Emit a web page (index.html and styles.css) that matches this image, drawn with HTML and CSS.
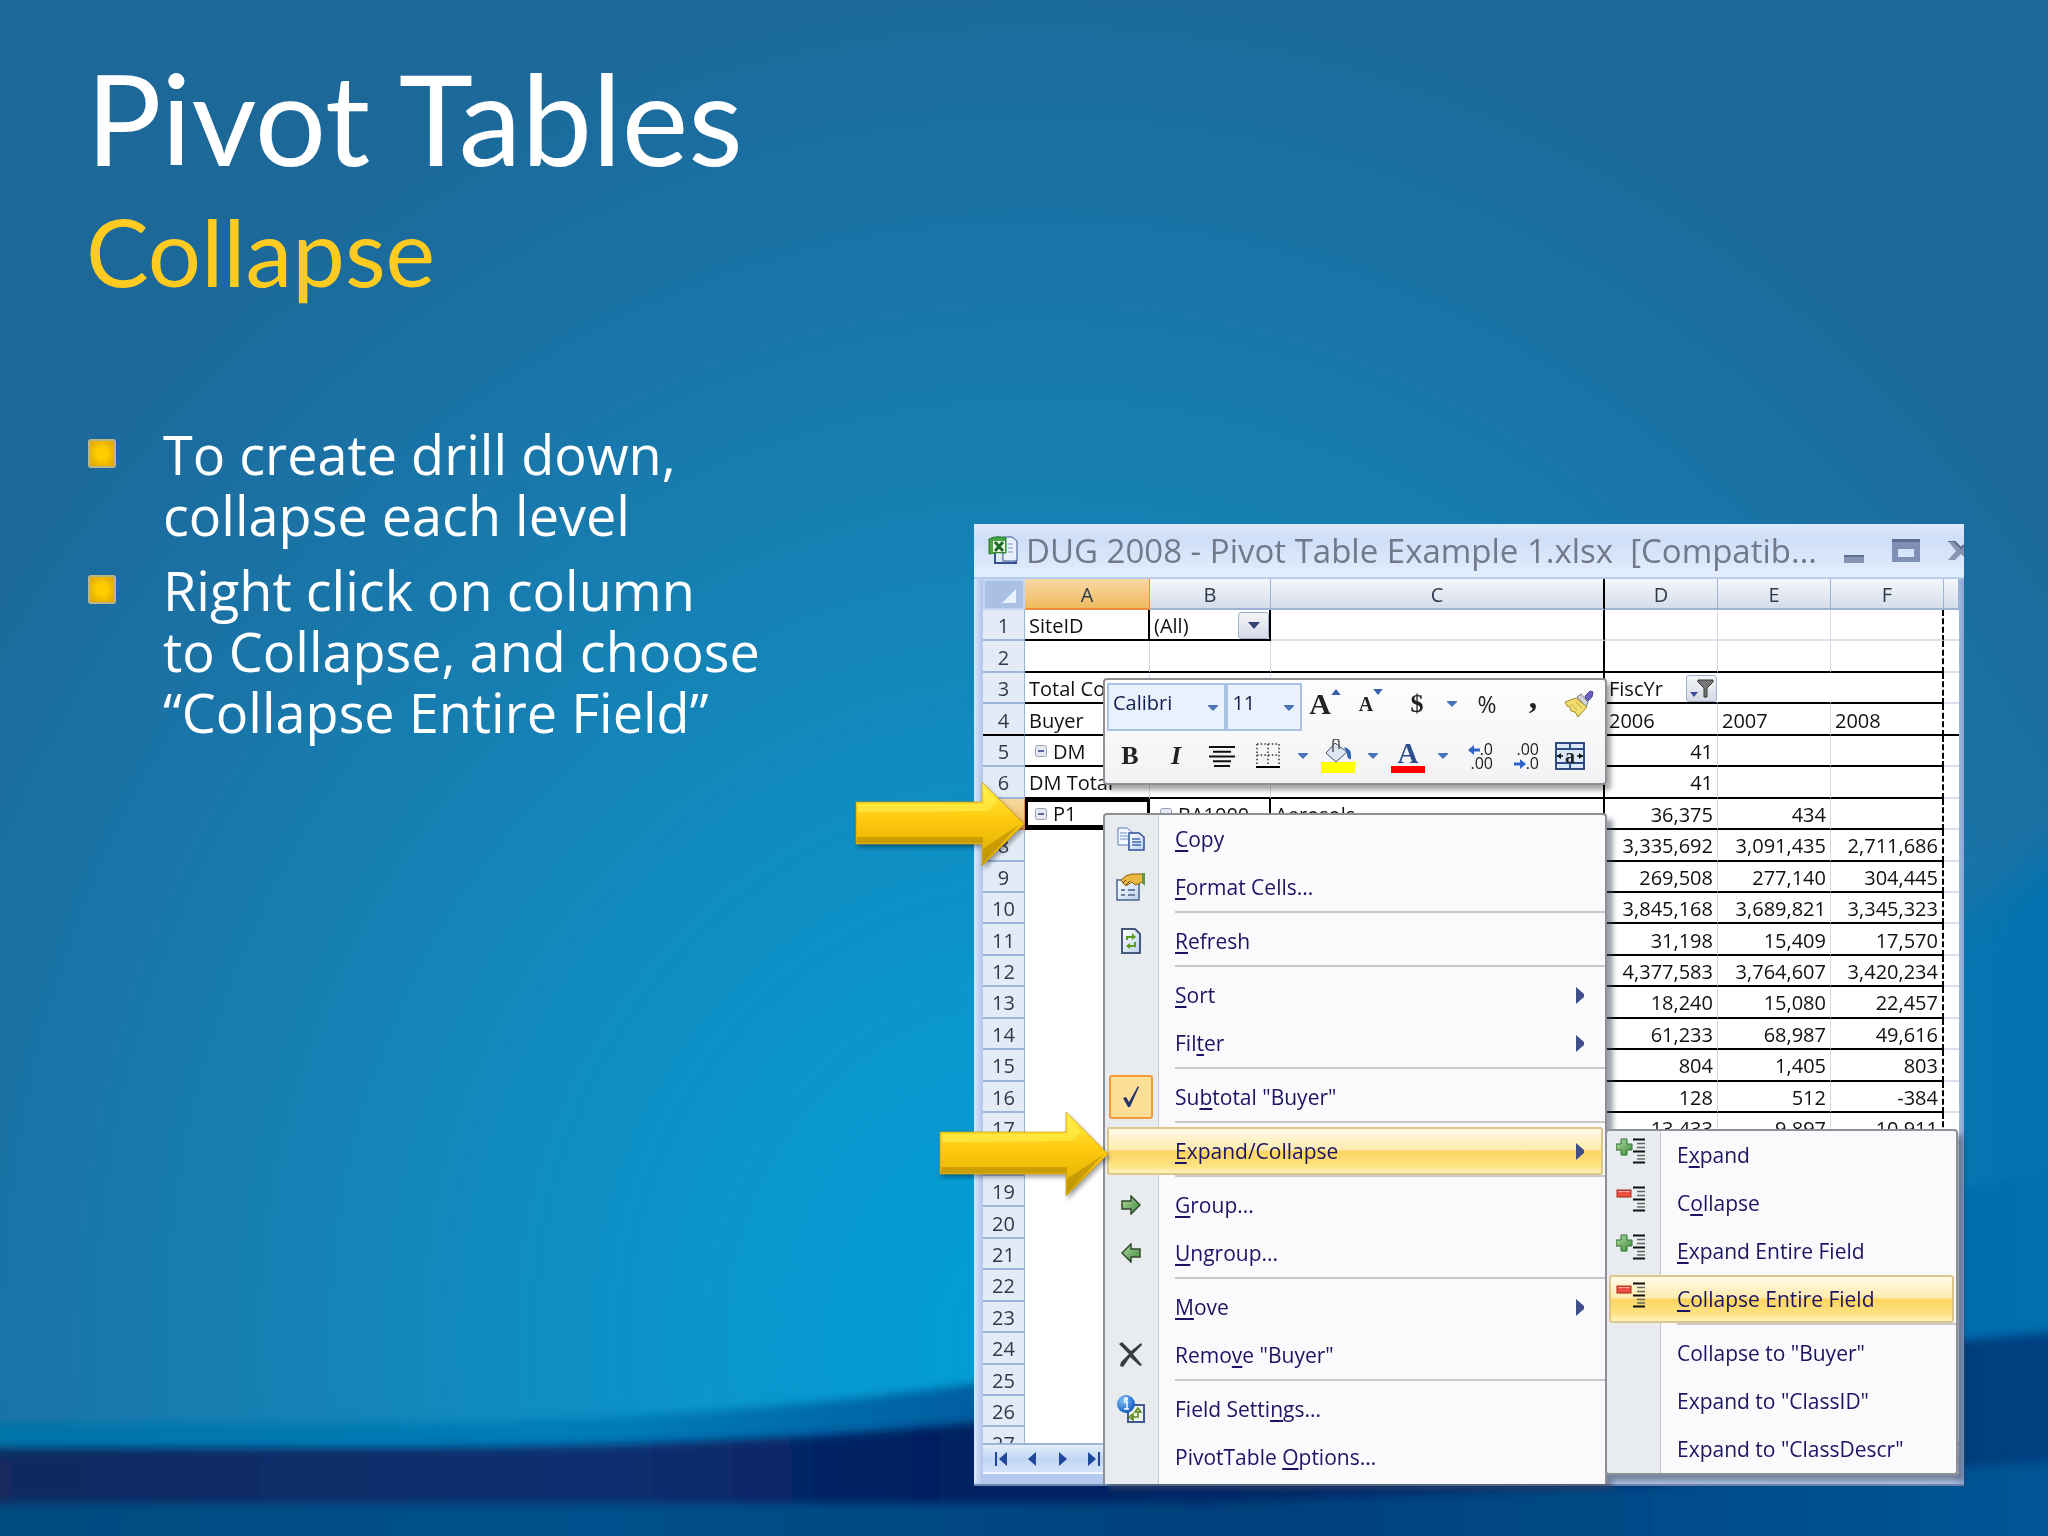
FILE: index.html
```html
<!DOCTYPE html>
<html lang="en">
<head>
  <meta charset="UTF-8" />
  <meta name="viewport" content="width=device-width, initial-scale=1.0" />
  <title>Pivot Tables - Collapse</title>
  <link rel="stylesheet" href="styles.css">
</head>
<body>
  <!-- Slide background -->
  <svg class="backdrop" viewBox="0 0 2048 1536" preserveAspectRatio="none" aria-hidden="true">
    <defs>
      <radialGradient id="glow" gradientUnits="userSpaceOnUse" cx="0" cy="0" r="1" gradientTransform="translate(1040 1340) scale(1300 1400)">
        <stop offset="0" stop-color="#009fd6" />
        <stop offset="0.25" stop-color="#0a96cc" />
        <stop offset="0.55" stop-color="#1583b6" />
        <stop offset="0.85" stop-color="#1b70a3" />
        <stop offset="1" stop-color="#1c6899" />
      </radialGradient>
      <linearGradient id="side" x1="0" x2="1" y1="0" y2="0">
        <stop offset="0" stop-color="#0079b8" stop-opacity="0" />
        <stop offset="1" stop-color="#0072b0" />
      </linearGradient>
      <linearGradient id="band" x1="0" x2="1" y1="0" y2="0">
        <stop offset="0" stop-color="#0074a8" />
        <stop offset="0.3" stop-color="#007cb8" />
        <stop offset="0.5" stop-color="#005a9c" />
        <stop offset="1" stop-color="#006fb0" />
      </linearGradient>
      <linearGradient id="deep" x1="0" x2="1" y1="0" y2="0">
        <stop offset="0" stop-color="#122a5e" />
        <stop offset="0.3" stop-color="#0a2f70" />
        <stop offset="0.45" stop-color="#041f60" />
        <stop offset="1" stop-color="#004282" />
      </linearGradient>
      <linearGradient id="floor" x1="0" x2="1" y1="0" y2="0">
        <stop offset="0" stop-color="#004b80" />
        <stop offset="0.3" stop-color="#00508c" />
        <stop offset="0.6" stop-color="#00407c" />
        <stop offset="1" stop-color="#005696" />
      </linearGradient>
      <filter id="soft" x="-5%" y="-20%" width="110%" height="140%"><feGaussianBlur stdDeviation="5" /></filter>
      <filter id="softer" x="-10%" y="-20%" width="120%" height="140%"><feGaussianBlur stdDeviation="22" /></filter>
    </defs>
    <rect width="2048" height="1536" fill="url(#glow)" />
    <path d="M1500 1600V1180Q1800 1030 2100 820V1600Z" fill="url(#side)" filter="url(#softer)" />
    <path d="M-40 1423H380Q700 1422 980 1383Q1500 1290 2100 1160V1580H-40Z" fill="url(#band)" filter="url(#soft)" />
    <path d="M-40 1448H400Q740 1446 980 1422Q1500 1380 2100 1328V1580H-40Z" fill="url(#deep)" filter="url(#soft)" />
    <path d="M-40 1503H1200Q1700 1488 2100 1458V1580H-40Z" fill="url(#floor)" filter="url(#soft)" />
  </svg>

  <!-- Icons used by the menus -->
  <svg class="sprite" aria-hidden="true">
    <defs>
      <linearGradient id="green" x1="0" x2="1" y1="0" y2="1"><stop offset="0" stop-color="#b7dba4" /><stop offset="1" stop-color="#3d8a3b" /></linearGradient>
      <linearGradient id="gold" x1="0" x2="0" y1="0" y2="1"><stop offset="0" stop-color="#fff04a" /><stop offset="0.45" stop-color="#ffc90e" /><stop offset="1" stop-color="#d6a800" /></linearGradient>
      <linearGradient id="page" x1="0" x2="1" y1="0" y2="1"><stop offset="0" stop-color="#fff" /><stop offset="1" stop-color="#bcd0ee" /></linearGradient>
      <radialGradient id="ball" cx="0.35" cy="0.3" r="0.8"><stop offset="0" stop-color="#7cc0f8" /><stop offset="1" stop-color="#0b50b8" /></radialGradient>
    </defs>
    <symbol id="i-arrow-down" viewBox="0 0 10 6"><path d="M0 0h10v1L5 6 0 1z" fill="#4a73b8" /></symbol>
    <symbol id="i-tree" viewBox="0 0 12 26">
      <path d="M0 1.500h12M0 13.500h12M0 24.500h12" stroke="#111" stroke-width="2" />
      <path d="M4 5.500h8M4 9.500h8M4 17.500h8M4 21h8" stroke="#666" stroke-width="1.500" />
    </symbol>
    <symbol id="i-expand" viewBox="0 0 30 28">
      <path d="M5 1h6v5h5v6h-5v5H5v-5H0V6h5z" fill="url(#green)" stroke="#2f7335" />
      <use href="#i-tree" x="17" y="0" width="12" height="26" />
    </symbol>
    <symbol id="i-collapse" viewBox="0 0 30 28">
      <rect x="1" y="4" width="14" height="7" fill="#e8513f" stroke="#a8281c" />
      <path d="M2 5.500h12" stroke="#f7a294" />
      <use href="#i-tree" x="17" y="0" width="12" height="26" />
    </symbol>
    <symbol id="i-right" viewBox="0 0 8 17"><path d="M0 0l8 7v3L0 17z" fill="#3e4e86" /></symbol>
    <symbol id="i-minus" viewBox="0 0 12 12"><rect x="0.500" y="0.500" width="11" height="11" rx="2" fill="#e6e9f2" stroke="#9aa0b0" /><path d="M3 6h6" stroke="#2b3f80" stroke-width="1.500" /></symbol>
    <symbol id="i-callout" viewBox="0 0 170 86">
      <path d="M1 21H127V1L169 43 127 85V63H1Z" fill="url(#gold)" stroke="#c99c08" stroke-opacity="0.7" />
      <path d="M3 23H129V7L142 21 133 30 3 31Z" fill="#fff250" opacity="0.55" />
      <path d="M2 62V56H128V68L165 43 128 82V62Z" fill="#9a7400" opacity="0.4" />
    </symbol>
  </svg>

  <main class="slide">
    <header class="heading">
      <h1>Pivot Tables</h1>
      <p class="subtitle">Collapse</p>
    </header>

    <div class="content">
      <ul class="points">
        <li>To create drill down,<br>collapse each level</li>
        <li>Right click on column<br>to Collapse, and choose<br>“Collapse Entire Field”</li>
      </ul>

      <section class="window">
        <div class="title-bar">
          <svg class="excel-icon" viewBox="0 0 30 29" aria-hidden="true">
            <path d="M7 5h15l6 5v17H7z" fill="url(#page)" stroke="#36558f" stroke-width="2" />
            <path d="M15 1h9l5 4v20H15z" fill="#e9f0fb" stroke="#36558f" />
            <path d="M20 8h5M20 12h5M20 16h5" stroke="#7f9cca" />
            <path d="M1 3Q9-1 18 2V17Q8 16 1 18Z" fill="#4ba348" stroke="#1f7a2a" />
            <rect x="5" y="5" width="12" height="11" fill="#eef7e6" />
            <path d="M7 6l8 9M15 6l-8 9" stroke="#1c6e2a" stroke-width="3" />
          </svg>
          <h2>DUG 2008 - Pivot Table Example 1.xlsx&nbsp; [Compatib...</h2>
          <button class="win-button" aria-label="Minimize"><svg width="20" height="8" viewBox="0 0 20 8"><path d="M0 0h20v8H0z" fill="#8594b4" /><path d="M0 0h20v2H0z" fill="#5f6d90" /></svg></button>
          <button class="win-button" aria-label="Maximize"><svg width="28" height="23" viewBox="0 0 28 23"><path d="M0 0h28v23H0zM6 10v8h16v-8z" fill="#7e90b6" fill-rule="evenodd" /><path d="M0 0h28v3H0z" fill="#5d6c92" /></svg></button>
          <button class="win-button close" aria-label="Close"><svg width="16" height="20" viewBox="0 0 16 20"><path d="M0 0h6l7 7 3-3v12l-3-3-6 6H0l8-9z" fill="#8995b0" /><path d="M0 0h6l7 7 3-3" fill="none" stroke="#5f6d90" stroke-width="2" /></svg></button>
        </div>

        <div class="sheet">
          <table>
            <colgroup>
              <col class="col-head"><col class="col-a"><col class="col-b"><col><col class="col-num"><col class="col-num"><col class="col-num"><col class="col-end">
            </colgroup>
            <thead>
              <tr><th class="corner"><svg width="14" height="14" viewBox="0 0 14 14" aria-hidden="true"><path d="M14 0v14H0z" fill="#e8f0fb" /></svg></th><th class="active">A</th><th>B</th><th class="edge">C</th><th>D</th><th>E</th><th>F</th><th></th></tr>
            </thead>
            <tbody>
              <tr><th>1</th><td class="line side">SiteID</td><td class="line side"><div class="cell">(All)<button class="drop" aria-label="Filter SiteID"><svg width="12" height="7" viewBox="0 0 12 7"><path d="M0 0h12L6 7z" fill="#33427a" /></svg></button></div></td><td class="edge"></td><td></td><td></td><td></td><td></td></tr>
              <tr class="ruled"><th>2</th><td></td><td></td><td class="edge"></td><td></td><td></td><td></td><td></td></tr>
              <tr class="ruled open"><th>3</th><td>Total Cost</td><td></td><td class="edge"></td><td><div class="cell">FiscYr<button class="drop" aria-label="Filter FiscYr"><svg width="24" height="22" viewBox="0 0 24 22"><path d="M8 2h15v2l-6 6v9h-3v-9L8 4z" fill="#777" stroke="#333" /><path d="M0 14h8l-4 5z" fill="#3a4aa5" /></svg></button></div></td><td></td><td></td><td></td></tr>
              <tr class="ruled whole"><th>4</th><td>Buyer</td><td></td><td class="edge"></td><td>2006</td><td>2007</td><td>2008</td><td></td></tr>
              <tr class="ruled"><th>5</th><td><div class="toggle"><svg><use href="#i-minus" /></svg>DM</div></td><td></td><td class="edge"></td><td class="num">41</td><td></td><td></td><td></td></tr>
              <tr class="ruled"><th>6</th><td>DM Total</td><td></td><td class="edge"></td><td class="num">41</td><td></td><td></td><td></td></tr>
              <tr class="ruled"><th class="active">7</th><td class="selected"><div class="toggle"><svg><use href="#i-minus" /></svg>P1</div></td><td class="side"><div class="toggle"><svg><use href="#i-minus" /></svg>BA1000</div></td><td class="edge">Aerosols</td><td class="num">36,375</td><td class="num">434</td><td></td><td></td></tr>
              <tr class="ruled"><th>8</th><td class="blank" colspan="3"></td><td class="num">3,335,692</td><td class="num">3,091,435</td><td class="num">2,711,686</td><td></td></tr>
              <tr class="ruled"><th>9</th><td class="blank" colspan="3"></td><td class="num">269,508</td><td class="num">277,140</td><td class="num">304,445</td><td></td></tr>
              <tr class="ruled"><th>10</th><td class="blank" colspan="3"></td><td class="num">3,845,168</td><td class="num">3,689,821</td><td class="num">3,345,323</td><td></td></tr>
              <tr class="ruled"><th>11</th><td class="blank" colspan="3"></td><td class="num">31,198</td><td class="num">15,409</td><td class="num">17,570</td><td></td></tr>
              <tr class="ruled"><th>12</th><td class="blank" colspan="3"></td><td class="num">4,377,583</td><td class="num">3,764,607</td><td class="num">3,420,234</td><td></td></tr>
              <tr class="ruled"><th>13</th><td class="blank" colspan="3"></td><td class="num">18,240</td><td class="num">15,080</td><td class="num">22,457</td><td></td></tr>
              <tr class="ruled"><th>14</th><td class="blank" colspan="3"></td><td class="num">61,233</td><td class="num">68,987</td><td class="num">49,616</td><td></td></tr>
              <tr class="ruled"><th>15</th><td class="blank" colspan="3"></td><td class="num">804</td><td class="num">1,405</td><td class="num">803</td><td></td></tr>
              <tr class="ruled"><th>16</th><td class="blank" colspan="3"></td><td class="num">128</td><td class="num">512</td><td class="num">-384</td><td></td></tr>
              <tr class="ruled"><th>17</th><td class="blank" colspan="3"></td><td class="num">13,433</td><td class="num">9,897</td><td class="num">10,911</td><td></td></tr>
              <tr><th>18</th><td class="blank" colspan="7"></td></tr>
              <tr><th>19</th><td class="blank" colspan="7"></td></tr>
              <tr><th>20</th><td class="blank" colspan="7"></td></tr>
              <tr><th>21</th><td class="blank" colspan="7"></td></tr>
              <tr><th>22</th><td class="blank" colspan="7"></td></tr>
              <tr><th>23</th><td class="blank" colspan="7"></td></tr>
              <tr><th>24</th><td class="blank" colspan="7"></td></tr>
              <tr><th>25</th><td class="blank" colspan="7"></td></tr>
              <tr><th>26</th><td class="blank" colspan="7"></td></tr>
              <tr><th>27</th><td class="blank" colspan="7"></td></tr>
            </tbody>
          </table>
        </div>

        <nav class="sheet-nav" aria-label="Sheets">
          <button aria-label="First sheet"><svg width="12" height="14" viewBox="0 0 12 14"><path d="M0 0h2v14H0zM12 0v14L4 7z" /></svg></button>
          <button aria-label="Previous sheet"><svg width="8" height="14" viewBox="0 0 8 14"><path d="M8 0v14L0 7z" /></svg></button>
          <button aria-label="Next sheet"><svg width="8" height="14" viewBox="0 0 8 14"><path d="M0 0v14l8-7z" /></svg></button>
          <button aria-label="Last sheet"><svg width="12" height="14" viewBox="0 0 12 14"><path d="M10 0h2v14h-2zM0 0v14l8-7z" /></svg></button>
        </nav>

        <!-- Mini toolbar -->
        <div class="toolbar">
          <div class="tool-row top">
            <div class="combo font-name">
              <select aria-label="Font"><option>Calibri</option></select>
              <svg><use href="#i-arrow-down" /></svg>
            </div>
            <div class="combo font-size">
              <select aria-label="Font size"><option>11</option></select>
              <svg><use href="#i-arrow-down" /></svg>
            </div>
            <button class="tool serif grow">A<svg width="10" height="6" viewBox="0 0 8 5"><path d="M0 5h8L4 0z" fill="#3a62ac" /></svg></button>
            <button class="tool serif shrink">A<svg width="10" height="6" viewBox="0 0 8 5"><path d="M0 0h8L4 5z" fill="#3a62ac" /></svg></button>
            <button class="tool serif">$</button>
            <button class="tool more" aria-label="Currency options"><svg><use href="#i-arrow-down" /></svg></button>
            <button class="tool">%</button>
            <button class="tool serif comma">,</button>
            <button class="tool" aria-label="Format painter">
              <svg width="30" height="28" viewBox="0 0 30 28"><path d="M21 6l5-5 3 1-1 5-5 5z" fill="#6b62c0" stroke="#4a3f9a" /><path d="M13 7l4-3 7 8-2 5z" fill="#d0d3da" stroke="#777" /><path d="M12 8L1 12l2 4 3 1 1 4 4 1 3 5 9-10z" fill="#f0dc6c" stroke="#a08a2c" /><path d="M7 14l6 6M12 12l6 6" stroke="#c6a93a" /></svg>
            </button>
          </div>
          <div class="tool-row">
            <button class="tool serif">B</button>
            <button class="tool serif italic">I</button>
            <button class="tool align" aria-label="Center"><svg width="26" height="21" viewBox="0 0 26 21"><path d="M0 1h26M4 5.800h18M0 10.500h26M4 15.200h18M5 20h16" stroke="#111" stroke-width="2" /></svg></button>
            <button class="tool" aria-label="Borders"><svg width="24" height="26" viewBox="0 0 24 26"><path d="M1 1h22M1 12h22M1 1v20M12 1v20M23 1v20" stroke="#333" stroke-width="1.500" stroke-dasharray="1.500 2.200" fill="none" /><path d="M0 24h24" stroke="#000" stroke-width="2" /></svg></button>
            <button class="tool more" aria-label="Border options"><svg><use href="#i-arrow-down" /></svg></button>
            <button class="tool" aria-label="Fill color"><svg width="34" height="34" viewBox="0 0 34 34"><path d="M0 23h34v11H0z" fill="#ff0" /><path d="M14 4l12 9-11 10L5 14z" fill="#dde6f5" stroke="#3c4a66" /><path d="M12 13V3q0-3 3-3t3 3v7" fill="none" stroke="#555" stroke-width="1.500" /><path d="M23 8q8 1 7 12-4 1-4-6z" fill="#2f63b8" /></svg></button>
            <button class="tool more" aria-label="Fill options"><svg><use href="#i-arrow-down" /></svg></button>
            <button class="tool serif font-color">A</button>
            <button class="tool more" aria-label="Font color options"><svg><use href="#i-arrow-down" /></svg></button>
            <button class="tool decimal"><span><svg width="12" height="10" viewBox="0 0 12 10"><path d="M12 5H4" stroke="#2f63c8" stroke-width="3" /><path d="M6 0v10L0 5z" fill="#2f63c8" /></svg>.0</span><span>.00</span></button>
            <button class="tool decimal"><span>.00</span><span><svg width="12" height="10" viewBox="0 0 12 10"><path d="M0 5h8" stroke="#2f63c8" stroke-width="3" /><path d="M6 0v10l6-5z" fill="#2f63c8" /></svg>.0</span></button>
            <button class="tool merge" aria-label="Merge and center"><svg width="30" height="28" viewBox="0 0 30 28"><path d="M1 1h28v26H1z" fill="#dce8f8" stroke="#2f4d85" stroke-width="2" /><path d="M1 7h28M1 21h28M15 1v6M15 21v6" stroke="#2f4d85" stroke-width="2" /><path d="M2 14h6M22 14h6" stroke="#111" stroke-width="1.500" /><path d="M2 14l4-3v6zM28 14l-4-3v6z" fill="#111" /></svg><b>a</b></button>
          </div>
        </div>

        <!-- Context menu -->
        <ul class="menu context">
          <li><button><span class="icon"><svg width="28" height="24" viewBox="0 0 28 24"><path d="M1 1h9l5 4v13H1z" fill="#f4f8ff" stroke="#5b7cb8" /><path d="M3 6h7M3 9h8M3 12h8" stroke="#6e8fca" /><path d="M12 6h10l5 4v13H12z" fill="url(#page)" stroke="#2b4f98" stroke-width="1.500" /><path d="M15 12h8M15 15h9M15 18h9" stroke="#3e68b4" stroke-width="1.500" /></svg></span><u>C</u>opy</button></li>
          <li><button><span class="icon"><svg width="30" height="28" viewBox="0 0 30 28"><path d="M1 7h22v20H1z" fill="url(#page)" stroke="#4b6390" stroke-width="1.500" /><path d="M5 17h4M12 17h7M5 22h4M12 22h7" stroke="#6f82a6" stroke-width="2" /><path d="M5 7q4-5 11-6h11v8l-8 3-3-3-6 4-3-3z" fill="#eab942" stroke="#8d6412" /><path d="M7 10l3-3M10 12l4-4" stroke="#5e430c" /><path d="M26 0h3v13l-3-3z" fill="#5a9a4c" /></svg></span><u>F</u>ormat Cells...</button></li>
          <li class="separator"></li>
          <li><button><span class="icon"><svg width="20" height="26" viewBox="0 0 20 26"><path d="M1 1h13l5 5v19H1z" fill="url(#page)" stroke="#46587e" stroke-width="2" /><path d="M6 12V9h6M14 14v4H8" fill="none" stroke="#5a9c16" stroke-width="2" /><path d="M11 5l4 4-4 3zM9 15v6l-4-3z" fill="#5a9c16" /></svg></span><u>R</u>efresh</button></li>
          <li class="separator"></li>
          <li><button><span class="icon"></span><u>S</u>ort<svg class="more-arrow"><use href="#i-right" /></svg></button></li>
          <li><button><span class="icon"></span>Fil<u>t</u>er<svg class="more-arrow"><use href="#i-right" /></svg></button></li>
          <li class="separator"></li>
          <li><button><span class="icon checked"><svg width="18" height="24" viewBox="0 0 18 24"><path d="M1 13l3-1 3 5L16 1l1 1L8 22H6z" fill="#26336e" /></svg></span>Su<u>b</u>total "Buyer"</button></li>
          <li class="separator"></li>
          <li class="current"><button><span class="icon"></span><u>E</u>xpand/Collapse<svg class="more-arrow"><use href="#i-right" /></svg></button></li>
          <li class="separator"></li>
          <li><button><span class="icon"><svg width="20" height="20" viewBox="0 0 20 20"><path d="M1 6h9V1l9 9-9 9v-5H1z" fill="url(#green)" stroke="#34482f" stroke-width="1.500" /></svg></span><u>G</u>roup...</button></li>
          <li><button><span class="icon"><svg width="20" height="20" viewBox="0 0 20 20"><path d="M19 6h-9V1l-9 9 9 9v-5h9z" fill="url(#green)" stroke="#34482f" stroke-width="1.500" /></svg></span><u>U</u>ngroup...</button></li>
          <li class="separator"></li>
          <li><button><span class="icon"></span><u>M</u>ove<svg class="more-arrow"><use href="#i-right" /></svg></button></li>
          <li><button><span class="icon"><svg width="24" height="26" viewBox="0 0 24 26"><path d="M0 2l3-2 9 9 10-8 1 2-9 9 9 11-2 1-10-9-7 10-3-1 1-4 8-8z" fill="#3a3d40" /></svg></span>Remo<u>v</u>e "Buyer"</button></li>
          <li class="separator"></li>
          <li><button><span class="icon"><svg width="28" height="28" viewBox="0 0 28 28"><path d="M11 10h16v17H11z" fill="#eef5e8" stroke="#40598f" stroke-width="2" /><path d="M14 22h7v-6M12 22l4-3v6zM18 17l3-4 3 4z" fill="none" stroke="#5c8a22" stroke-width="1.500" /><circle cx="9" cy="9" r="9" fill="url(#ball)" /><path d="M7 7h3v7M7 14h5M8 3h2v2H8z" stroke="#fff" stroke-width="1.500" fill="none" /></svg></span>Field Setti<u>n</u>gs...</button></li>
          <li><button><span class="icon"></span>PivotTable <u>O</u>ptions...</button></li>
        </ul>

        <ul class="menu submenu">
          <li><button><span class="icon"><svg width="30" height="28"><use href="#i-expand" /></svg></span>E<u>x</u>pand</button></li>
          <li><button><span class="icon"><svg width="30" height="28"><use href="#i-collapse" /></svg></span>C<u>o</u>llapse</button></li>
          <li><button><span class="icon"><svg width="30" height="28"><use href="#i-expand" /></svg></span><u>E</u>xpand Entire Field</button></li>
          <li class="current"><button><span class="icon"><svg width="30" height="28"><use href="#i-collapse" /></svg></span><u>C</u>ollapse Entire Field</button></li>
          <li class="separator"></li>
          <li><button><span class="icon"></span>Collapse to "Buyer"</button></li>
          <li><button><span class="icon"></span>Expand to "ClassID"</button></li>
          <li><button><span class="icon"></span>Expand to "ClassDescr"</button></li>
        </ul>

        <svg class="callout callout-cell" aria-hidden="true"><use href="#i-callout" /></svg>
        <svg class="callout callout-menu" aria-hidden="true"><use href="#i-callout" /></svg>
      </section>
    </div>
  </main>
</body>
</html>
```
FILE: styles.css
```css
*,
*::before {
  box-sizing: border-box;
}

body {
  margin: 0;
  min-height: 100vh;
  background-color: #1a6fa3;
  font-family: "Open Sans", "Noto Sans", sans-serif;
}

.backdrop {
  position: fixed;
  inset: 0;
  width: 100%;
  height: 100%;
}

.sprite {
  position: absolute;
  width: 0;
  height: 0;
}

.slide {
  position: relative;
  padding: 48px 84px 52px 86px;
}

.heading {
  font-family: Lato, "Open Sans", sans-serif;
  margin-bottom: 110px;
}

h1 {
  margin: 0;
  font-size: 126px;
  line-height: 140px;
  font-weight: 400;
  color: white;
}

.subtitle {
  margin: 0;
  font-size: 94px;
  line-height: 126px;
  color: #ffcb20;
}

.content {
  display: flex;
  align-items: flex-start;
}

.points {
  flex: 1;
  margin: 0;
  padding: 0;
  list-style: none;
  font-size: 54px;
  line-height: 61px;
  color: white;
}

.points li {
  position: relative;
  margin-bottom: 14px;
  padding-left: 77px;
}

.points li::before {
  content: "";
  position: absolute;
  left: 2px;
  top: 15px;
  width: 28px;
  height: 29px;
  border: 2px solid #b9b68a;
  border-radius: 3px;
  background: radial-gradient(#ffcc00 30%, #d9a300);
}

/* Spreadsheet window */
.window {
  position: relative;
  flex: 0 1 990px;
  margin-top: 100px;
  padding: 0 5px 10px 9px;
  background: linear-gradient(90deg, #dbe6f8, #b3c8ec 8px, #b3c8ec 99%, #8aa5d0);
  border-bottom: 2px solid #6d84ae;
}

.title-bar {
  display: flex;
  align-items: center;
  height: 55px;
  margin: 0 -5px 0 -9px;
  padding-left: 14px;
  overflow: hidden;
  background: linear-gradient(#dde8fb, #cfdff8 30%, #e4eefc);
  border-bottom: 2px solid #b8cdee;
}

.excel-icon {
  width: 30px;
  height: 29px;
  margin-right: 8px;
}

h2 {
  flex: 1;
  margin: 0;
  font-size: 33px;
  line-height: 48px;
  font-weight: 400;
  white-space: nowrap;
  color: #71798a;
}

.win-button {
  flex: none;
  display: flex;
  margin-left: 28px;
  padding: 0;
  border: none;
  background: none;
}

.win-button:first-of-type {
  margin-left: 0;
  align-self: flex-end;
  margin-bottom: 14px;
}

.sheet {
  height: 864px;
  overflow: hidden;
  background: white;
}

table {
  width: 100%;
  height: 880px;
  table-layout: fixed;
  border-collapse: separate;
  border-spacing: 0;
  font-size: 20px;
  line-height: 27px;
  color: #111;
}

.col-head { width: 42px; }
.col-a { width: 125px; }
.col-b { width: 121px; }
.col-num { width: 113px; }
.col-end { width: 15px; }

th {
  padding: 2px 0 0;
  font-weight: 400;
  color: #2f3a4c;
  background: #e3ebf7;
  border-right: 1px solid #9db4d6;
  border-bottom: 2px solid #9db4d6;
}

thead tr {
  height: 31px;
}

thead th {
  background: linear-gradient(#f5f8fc, #d5dde9);
}

th.corner {
  padding-right: 7px;
  background: #a9c0e4;
  border: 2px solid #c3d5ef;
}

.corner svg {
  display: block;
  margin-left: auto;
}

th.active {
  background: linear-gradient(#f8d9a4, #f0bb5f);
  border-color: #f08c3c;
}

td {
  padding: 2px 4px 0;
  overflow: hidden;
  white-space: nowrap;
  border-right: 1px solid #d3d9e6;
  border-bottom: 2px solid #dde0ea;
}

td:nth-last-child(2) {
  border-right: 2px dashed #000;
}

tr td:last-child {
  border-right: none;
}

.ruled td:not(:last-child),
.whole td:last-child,
.whole th,
.line {
  border-bottom-color: #000;
}

.side,
.edge {
  border-right: 2px solid #000;
}

.open td:nth-last-child(3),
.open td:nth-last-child(4) {
  border-right-color: transparent;
}

.ruled td.blank,
td.blank {
  border-bottom-color: transparent;
}

.num {
  text-align: right;
}

.cell {
  display: flex;
  justify-content: space-between;
  align-items: center;
  margin-right: -4px;
}

.drop {
  display: flex;
  justify-content: center;
  align-items: center;
  width: 31px;
  height: 27px;
  padding: 0;
  border: 1px solid #9fb1cf;
  border-radius: 3px;
  background: linear-gradient(#f4f5f8, #d5dae5);
}

.toggle {
  display: flex;
  align-items: center;
  gap: 6px;
  padding-left: 6px;
}

.toggle svg {
  width: 12px;
  height: 12px;
}

.ruled td.selected {
  padding: 1px 1px 0;
  line-height: 22px;
  border: 3px solid #000;
  border-bottom-width: 5px;
}

.sheet-nav {
  display: flex;
  align-items: center;
  height: 31px;
  padding-left: 8px;
  gap: 11px;
  background: linear-gradient(#e3eefc, #c2d6f4 50%, #d3e3f9);
  border-top: 2px solid #9db4d6;
  border-bottom: 2px solid #f2f7ff;
}

.sheet-nav button {
  display: flex;
  justify-content: center;
  width: 20px;
  padding: 0;
  border: none;
  background: none;
}

.sheet-nav path {
  fill: #1f489c;
}

/* Mini toolbar */
.toolbar {
  position: absolute;
  left: 129px;
  top: 154px;
  width: 504px;
  height: 107px;
  padding: 3px 3px 3px 2px;
  background: linear-gradient(#fdfdfd, #f3f3f5);
  border: 2px solid #8e9096;
  border-radius: 4px;
  box-shadow: 4px 5px 5px rgba(0, 0, 0, 0.35);
}

.tool-row {
  display: flex;
  align-items: center;
  height: 50px;
}

.tool-row.top {
  align-items: flex-start;
  height: 48px;
}

.combo {
  position: relative;
  height: 48px;
}

.combo select {
  width: 100%;
  height: 100%;
  padding: 0 4px 10px;
  font: 20px "Open Sans", sans-serif;
  color: #14204e;
  background: #e9f1fc;
  border: 2px solid #a9c2e4;
  border-radius: 0;
  appearance: none;
}

.combo svg {
  position: absolute;
  right: 8px;
  top: 22px;
  width: 10px;
  height: 6px;
}

.font-name { width: 120px; }
.font-size { width: 76px; }

.tool {
  display: flex;
  justify-content: center;
  align-items: center;
  flex: none;
  width: 46px;
  height: 42px;
  padding: 0;
  border: none;
  background: none;
  font-family: inherit;
  font-size: 23px;
  color: #222;
}

.tool.serif {
  font-family: "Liberation Serif", serif;
  font-weight: 700;
  font-size: 26px;
}

.tool.more {
  width: 24px;
}

.more svg {
  width: 10px;
  height: 6px;
}

.grow svg,
.shrink svg {
  align-self: flex-start;
  margin-top: 6px;
}

.tool.serif.grow {
  font-size: 30px;
}

.tool.serif.shrink {
  font-size: 20px;
}

.tool.serif.comma {
  padding-bottom: 14px;
  font-size: 34px;
}

.tool.serif.italic {
  font-style: italic;
}

.tool.serif.font-color {
  height: 34px;
  width: 34px;
  margin: 0 6px;
  line-height: 24px;
  font-size: 29px;
  color: #2d4d8c;
  border-bottom: 7px solid #f00;
}

.tool.decimal {
  flex-direction: column;
  align-items: flex-end;
  padding-right: 8px;
  font-size: 16px;
  line-height: 14px;
}

.merge {
  position: relative;
}

.merge b {
  position: absolute;
  font: 700 20px/20px "Liberation Serif", serif;
}

/* Menus */
.menu {
  position: absolute;
  margin: 0;
  padding: 0;
  list-style: none;
  background: linear-gradient(90deg, #e9ecee 53px, #c5c9cc 53px, #c5c9cc 54px, #fafafc 54px);
  border: 2px solid #8e9096;
  border-radius: 4px;
  box-shadow: 6px 6px 5px rgba(60, 70, 90, 0.5);
}

.context {
  left: 129px;
  top: 289px;
  width: 504px;
  height: 671px;
  border-bottom: none;
  border-radius: 4px 4px 0 0;
}

.submenu {
  left: 631px;
  top: 605px;
  width: 353px;
  height: 346px;
}

.menu button {
  display: flex;
  align-items: center;
  width: 100%;
  height: 48px;
  padding: 0;
  border: none;
  background: none;
  font: 21px "Open Sans", sans-serif;
  color: #1b1464;
  text-align: left;
  white-space: pre;
}

.menu u {
  text-underline-offset: 3px;
  text-decoration-thickness: 2px;
}

.icon {
  display: flex;
  justify-content: center;
  align-items: center;
  flex: none;
  width: 44px;
  height: 44px;
  margin: 0 22px 0 4px;
}

.submenu .icon {
  padding: 0 4px 6px 0;
}

.icon.checked {
  background: #ffdf95;
  border: 2px solid #f09a3c;
  border-radius: 3px;
}

.more-arrow {
  width: 8px;
  height: 17px;
  margin: 0 21px 0 auto;
}

.separator {
  height: 6px;
  margin-left: 70px;
  border-top: 2px solid #c8c8cb;
}

.current {
  margin: 0 2px;
  background: linear-gradient(#fffbe8, #feeaac 48%, #fdd560 50%, #fee384 85%, #fff3bd);
  border: 2px solid #dcc68a;
  border-radius: 3px;
}

.menu .current button {
  height: 44px;
}

.current .icon {
  margin-left: 0;
}

.current .more-arrow {
  margin-right: 17px;
}

/* Yellow pointers */
.callout {
  position: absolute;
  width: 170px;
  height: 86px;
  filter: drop-shadow(2px 3px 2px rgba(0, 0, 0, 0.35));
}

.callout-cell {
  left: -119px;
  top: 257px;
}

.callout-menu {
  left: -35px;
  top: 587px;
}
```
